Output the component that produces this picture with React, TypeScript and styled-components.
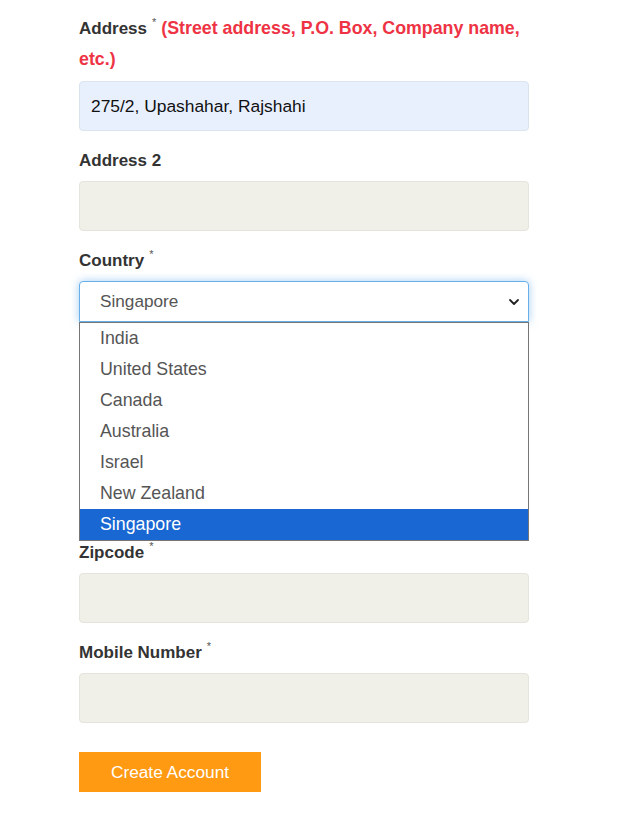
import React from "react";
import styled, { createGlobalStyle } from "styled-components";

const Global = createGlobalStyle`
  html, body { margin: 0; padding: 0; background: #fff; }
  body { font-family: "Liberation Sans", Arial, sans-serif; }
  * { box-sizing: border-box; }
`;

const Form = styled.form`
  width: 450px;
  margin-left: 79px;
  padding-top: 13px;
  display: flex;
  flex-direction: column;
`;

const Group = styled.div<{ $gap?: number }>`
  position: relative;
  display: flex;
  flex-direction: column;
  margin-bottom: ${(p) => p.$gap ?? 14}px;
`;

const Label = styled.label<{ $space?: number }>`
  font-size: 17px;
  font-weight: 700;
  line-height: 31px;
  color: #333;
  margin-bottom: ${(p) => p.$space ?? 5}px;
`;

const Star = styled.sup`
  font-size: 11px;
  font-weight: 400;
  color: #555;
  vertical-align: 8px;
  line-height: 0;
  margin-left: 5px;
`;

const Hint = styled.span`
  font-size: 17.8px;
  color: #ee3344;
  margin-left: 5px;
`;

const Input = styled.div<{ $filled?: boolean }>`
  height: 50px;
  border-radius: 4px;
  border: 1px solid ${(p) => (p.$filled ? "#dbe3ef" : "#e4e4dc")};
  background: ${(p) => (p.$filled ? "#e8f0fe" : "#f0efe8")};
  font-size: 17.4px;
  color: #111;
  padding: 0 11px;
  display: flex;
  align-items: center;
`;

const Select = styled.div`
  height: 41px;
  border: 1px solid #66afe9;
  border-radius: 4px 4px 0 0;
  box-shadow: 0 0 8px rgba(102, 175, 233, 0.6);
  background: #fff;
  display: flex;
  align-items: center;
  justify-content: space-between;
  padding: 0 8px 0 20px;
  font-size: 17.2px;
  color: #555;
`;

const Menu = styled.ul`
  position: absolute;
  top: 77px;
  left: 0;
  width: 450px;
  margin: 0;
  padding: 0;
  list-style: none;
  background: #fff;
  border: 1px solid #767676;
  z-index: 5;
`;

const Option = styled.li<{ $active?: boolean }>`
  height: 31px;
  line-height: 31px;
  padding-left: 20px;
  font-size: 17.8px;
  color: ${(p) => (p.$active ? "#fff" : "#555")};
  background: ${(p) => (p.$active ? "#1967d2" : "transparent")};
`;

const Button = styled.button`
  margin-top: 15px;
  width: 182px;
  height: 40px;
  border: 0;
  background: #ff9a12;
  color: #fff;
  font-family: "Liberation Sans", Arial, sans-serif;
  font-size: 17.3px;
  align-self: flex-start;
  padding: 0;
`;

const countries = [
  "India",
  "United States",
  "Canada",
  "Australia",
  "Israel",
  "New Zealand",
  "Singapore",
];

export default function App() {
  return (
    <>
      <Global />
      <Form>
        <Group>
          <Label $space={6}>
            Address<Star>*</Star>
            <Hint>(Street address, P.O. Box, Company name, etc.)</Hint>
          </Label>
          <Input $filled>275/2, Upashahar, Rajshahi</Input>
        </Group>
        <Group>
          <Label>Address 2</Label>
          <Input />
        </Group>
        <Group $gap={15}>
          <Label>
            Country<Star>*</Star>
          </Label>
          <Select>
            Singapore
            <svg width="12" height="12" viewBox="0 0 12 12">
              <path d="M2 4l4 4 4-4" fill="none" stroke="#222" strokeWidth="1.8" strokeLinecap="round" strokeLinejoin="round" />
            </svg>
          </Select>
          <Menu>
            {countries.map((c) => (
              <Option key={c} $active={c === "Singapore"}>
                {c}
              </Option>
            ))}
          </Menu>
        </Group>
        <Group>
          <Label>
            City<Star>*</Star>
          </Label>
          <Input />
        </Group>
        <Group>
          <Label>
            State<Star>*</Star>
          </Label>
          <Input />
        </Group>
        <Group>
          <Label>
            Zipcode<Star>*</Star>
          </Label>
          <Input />
        </Group>
        <Group>
          <Label>
            Mobile Number<Star>*</Star>
          </Label>
          <Input />
        </Group>
        <Button type="button">Create Account</Button>
      </Form>
    </>
  );
}
